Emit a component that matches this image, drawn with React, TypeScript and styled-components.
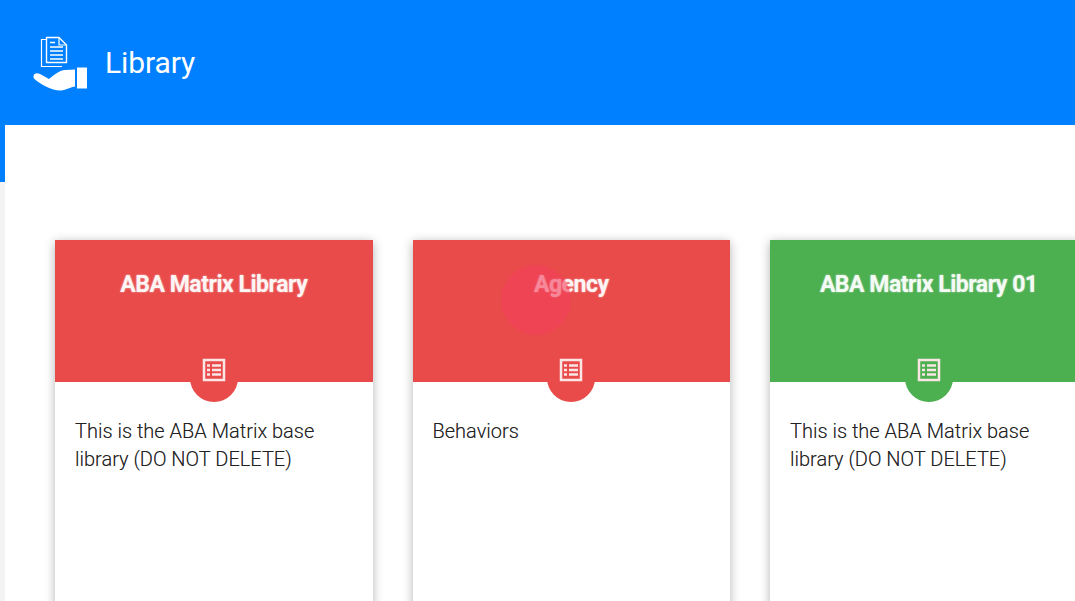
import React from "react";
import styled, { createGlobalStyle } from "styled-components";

const Global = createGlobalStyle`
  html, body { margin: 0; padding: 0; height: 601px; overflow: hidden; background: #fff; }
  * { box-sizing: border-box; }
  body { font-family: Roboto, "Liberation Sans", sans-serif; }
`;

const Page = styled.div`
  width: 1075px;
  height: 601px;
  display: flex;
  flex-direction: column;
  overflow: hidden;
  position: relative;
`;

const Header = styled.header`
  height: 125px;
  flex: none;
  background: #007fff;
  display: flex;
  align-items: center;
  padding-left: 32px;
  gap: 17px;
  color: #fff;
`;

const HeaderTitle = styled.h1`
  margin: 0;
  font-size: 30px;
  font-weight: 400;
  line-height: 36px;
  color: #fff;
  letter-spacing: -0.1px;
`;

const Body = styled.div`
  flex: 1;
  display: flex;
  min-height: 0;
`;

const Rail = styled.aside`
  width: 5px;
  flex: none;
  background: linear-gradient(#007fff 0 57px, #f3f3f3 57px);
`;

const Main = styled.main`
  flex: 1;
  min-width: 0;
  padding: 115px 0 0 50px;
  background: #fff;
`;

const Cards = styled.div`
  display: flex;
  gap: 40px;
`;

const Card = styled.article`
  width: 317.5px;
  flex: none;
  height: 420px;
  background: #fff;
  box-shadow: 0 2px 10px rgba(0, 0, 0, 0.3);
`;

const CardHead = styled.div<{ $color: string }>`
  height: 142px;
  background: ${(p) => p.$color};
  position: relative;
  padding-top: 27.5px;
  text-align: center;
`;

const CardTitle = styled.h2`
  margin: 0;
  font-size: 23px;
  line-height: 33px;
  font-weight: 700;
  color: #fff;
  letter-spacing: -0.47px;
  text-shadow: 0 0 2px rgba(255, 255, 255, 0.75);
  opacity: 0.94;
`;

const Badge = styled.div<{ $color: string }>`
  position: absolute;
  left: 50%;
  bottom: -20px;
  width: 48px;
  height: 48px;
  margin-left: -24px;
  border-radius: 50%;
  background: ${(p) => p.$color};
  display: flex;
  align-items: center;
  justify-content: center;
  padding-bottom: 16px;
`;

const CardText = styled.p`
  margin: 0;
  padding: 35px 20px 0;
  font-size: 20px;
  line-height: 28px;
  font-weight: 300;
  color: #222;
  text-shadow: 0 0 0.6px rgba(0, 0, 0, 0.35);
`;

const Ripple = styled.div`
  position: absolute;
  left: 501px;
  top: 265px;
  width: 70px;
  height: 70px;
  border-radius: 50%;
  background: rgba(243, 64, 92, 0.6);
`;

const ListIcon = () => (
  <svg width="24" height="24" viewBox="0 0 24 24" fill="none" stroke="#fbe6e6" strokeWidth="2.500">
    <rect x="2" y="2" width="20" height="20" />
    <path d="M5 7.500h3M10 7.500h9M5 12h3M10 12h9M5 16.500h3M10 16.500h9" strokeWidth="2.600" />
  </svg>
);

const LibraryIcon = () => (
  <svg width="56" height="56" viewBox="0 0 56 56" fill="none">
    <path d="M14.500 4.500H9.500V31.500H30" stroke="#fff" strokeWidth="1.200" />
    <path d="M14.500 2.500H27L34.500 10V27.500H14.500Z" stroke="#fff" strokeWidth="1.400" strokeLinejoin="round" />
    <path d="M27 2.500V10H34.500" stroke="#fff" strokeWidth="1.200" />
    <path d="M18 7.500H23M18 12H31M18 16H31M18 20H31M18 24H31" stroke="#fff" strokeWidth="1.300" />
    <path
      d="M1.500 41C2 38 5 37.500 8 39L17 44C22 40 27 35.500 33 35L43 34.500V51.500C36 53 33 55.500 28 55.500C20 55.500 8 49 3 44.500C2 43.500 1.200 42.500 1.500 41Z"
      fill="#fff"
    />
    <rect x="45" y="32.500" width="10" height="21" fill="#fff" />
  </svg>
);

const cards = [
  { title: "ABA Matrix Library", color: "#e84b4a", text: "This is the ABA Matrix base library (DO NOT DELETE)" },
  { title: "Agency", color: "#e84b4a", text: "Behaviors" },
  { title: "ABA Matrix Library 01", color: "#4caf50", text: "This is the ABA Matrix base library (DO NOT DELETE)" },
];

export default function App() {
  return (
    <Page>
      <Global />
      <Header>
        <LibraryIcon />
        <HeaderTitle>Library</HeaderTitle>
      </Header>
      <Body>
        <Rail />
        <Main>
          <Cards>
            {cards.map((c) => (
              <Card key={c.title}>
                <CardHead $color={c.color}>
                  <CardTitle>{c.title}</CardTitle>
                  <Badge $color={c.color}>
                    <ListIcon />
                  </Badge>
                </CardHead>
                <CardText>{c.text}</CardText>
              </Card>
            ))}
          </Cards>
        </Main>
      </Body>
      <Ripple />
    </Page>
  );
}
